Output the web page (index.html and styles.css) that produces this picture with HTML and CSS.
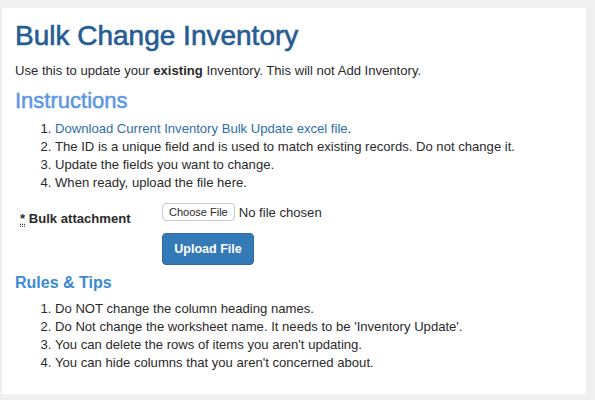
FILE: index.html
```html
<!DOCTYPE html>
<html>
<head>
<meta charset="utf-8">
<link rel="stylesheet" href="styles.css">
</head>
<body>
<div class="panel">
  <h1 class="title">Bulk Change Inventory</h1>
  <p class="intro">Use this to update your <b>existing</b> Inventory. This will not Add Inventory.</p>
  <h2 class="instructions">Instructions</h2>
  <ol class="list">
    <li><a href="#" class="link">Download Current Inventory Bulk Update excel file</a>.</li>
    <li>The ID is a unique field and is used to match existing records. Do not change it.</li>
    <li>Update the fields you want to change.</li>
    <li>When ready, upload the file here.</li>
  </ol>
  <div class="form-row">
    <label class="label"><abbr class="req" title="required">*</abbr> Bulk attachment</label>
    <div class="controls">
      <div class="file">
        <span class="choose">Choose File</span>
        <span class="nofile">No file chosen</span>
      </div>
      <button class="upload">Upload File</button>
    </div>
  </div>
  <h3 class="rules">Rules &amp; Tips</h3>
  <ol class="list">
    <li>Do NOT change the column heading names.</li>
    <li>Do Not change the worksheet name. It needs to be 'Inventory Update'.</li>
    <li>You can delete the rows of items you aren't updating.</li>
    <li>You can hide columns that you aren't concerned about.</li>
  </ol>
</div>
</body>
</html>
```
FILE: styles.css
```css
html, body {
  margin: 0;
  padding: 0;
  background: #f0f0f0;
}
body {
  font-family: "Liberation Sans", Arial, sans-serif;
  font-size: 13.1px;
  color: #2a2a2a;
  padding: 8px 9px 6px 2px;
}
.panel {
  background: #fff;
  height: 386px;
  box-sizing: border-box;
  padding: 12px 13px 0 13px;
}
.title {
  margin: 0;
  font-size: 28px;
  font-weight: normal;
  color: #255c93;
  -webkit-text-stroke: 0.6px #255c93;
  line-height: 32px;
}
.intro {
  margin: 10px 0 0;
  line-height: 18px;
}
.instructions {
  margin: 8px 0 0;
  font-size: 22px;
  font-weight: normal;
  color: #5b97e6;
  -webkit-text-stroke: 0.5px #5b97e6;
  line-height: 26px;
}
.list {
  margin: 6px 0 0;
  padding-left: 40px;
  line-height: 18px;
}
.link {
  color: #2d6ea8;
  text-decoration: none;
}
.form-row {
  display: flex;
  margin-top: 11px;
}
.label {
  width: 142px;
  padding-left: 5px;
  padding-top: 8px;
  font-weight: bold;
}
.req {
  text-decoration: underline dotted;
  border-bottom: 1px dotted #777;
}
.controls {
  display: flex;
  flex-direction: column;
  align-items: flex-start;
}
.file {
  display: flex;
  align-items: center;
  gap: 4px;
}
.choose {
  border: 1px solid #c8c8c8;
  border-radius: 4px;
  padding: 1px 6px;
  font-size: 11px;
  background: #fff;
  line-height: 14px;
}
.upload {
  margin-top: 12px;
  width: 92px;
  height: 32px;
  background: #337ab7;
  border: 1px solid #2e6da4;
  border-radius: 4px;
  color: #fff;
  font-family: inherit;
  font-size: 12.5px;
  font-weight: bold;
}
.rules {
  margin: 8px 0 0;
  font-size: 16px;
  font-weight: bold;
  color: #3b89d2;
  line-height: 20px;
}
.rules + .list {
  margin-top: 7px;
}
```
